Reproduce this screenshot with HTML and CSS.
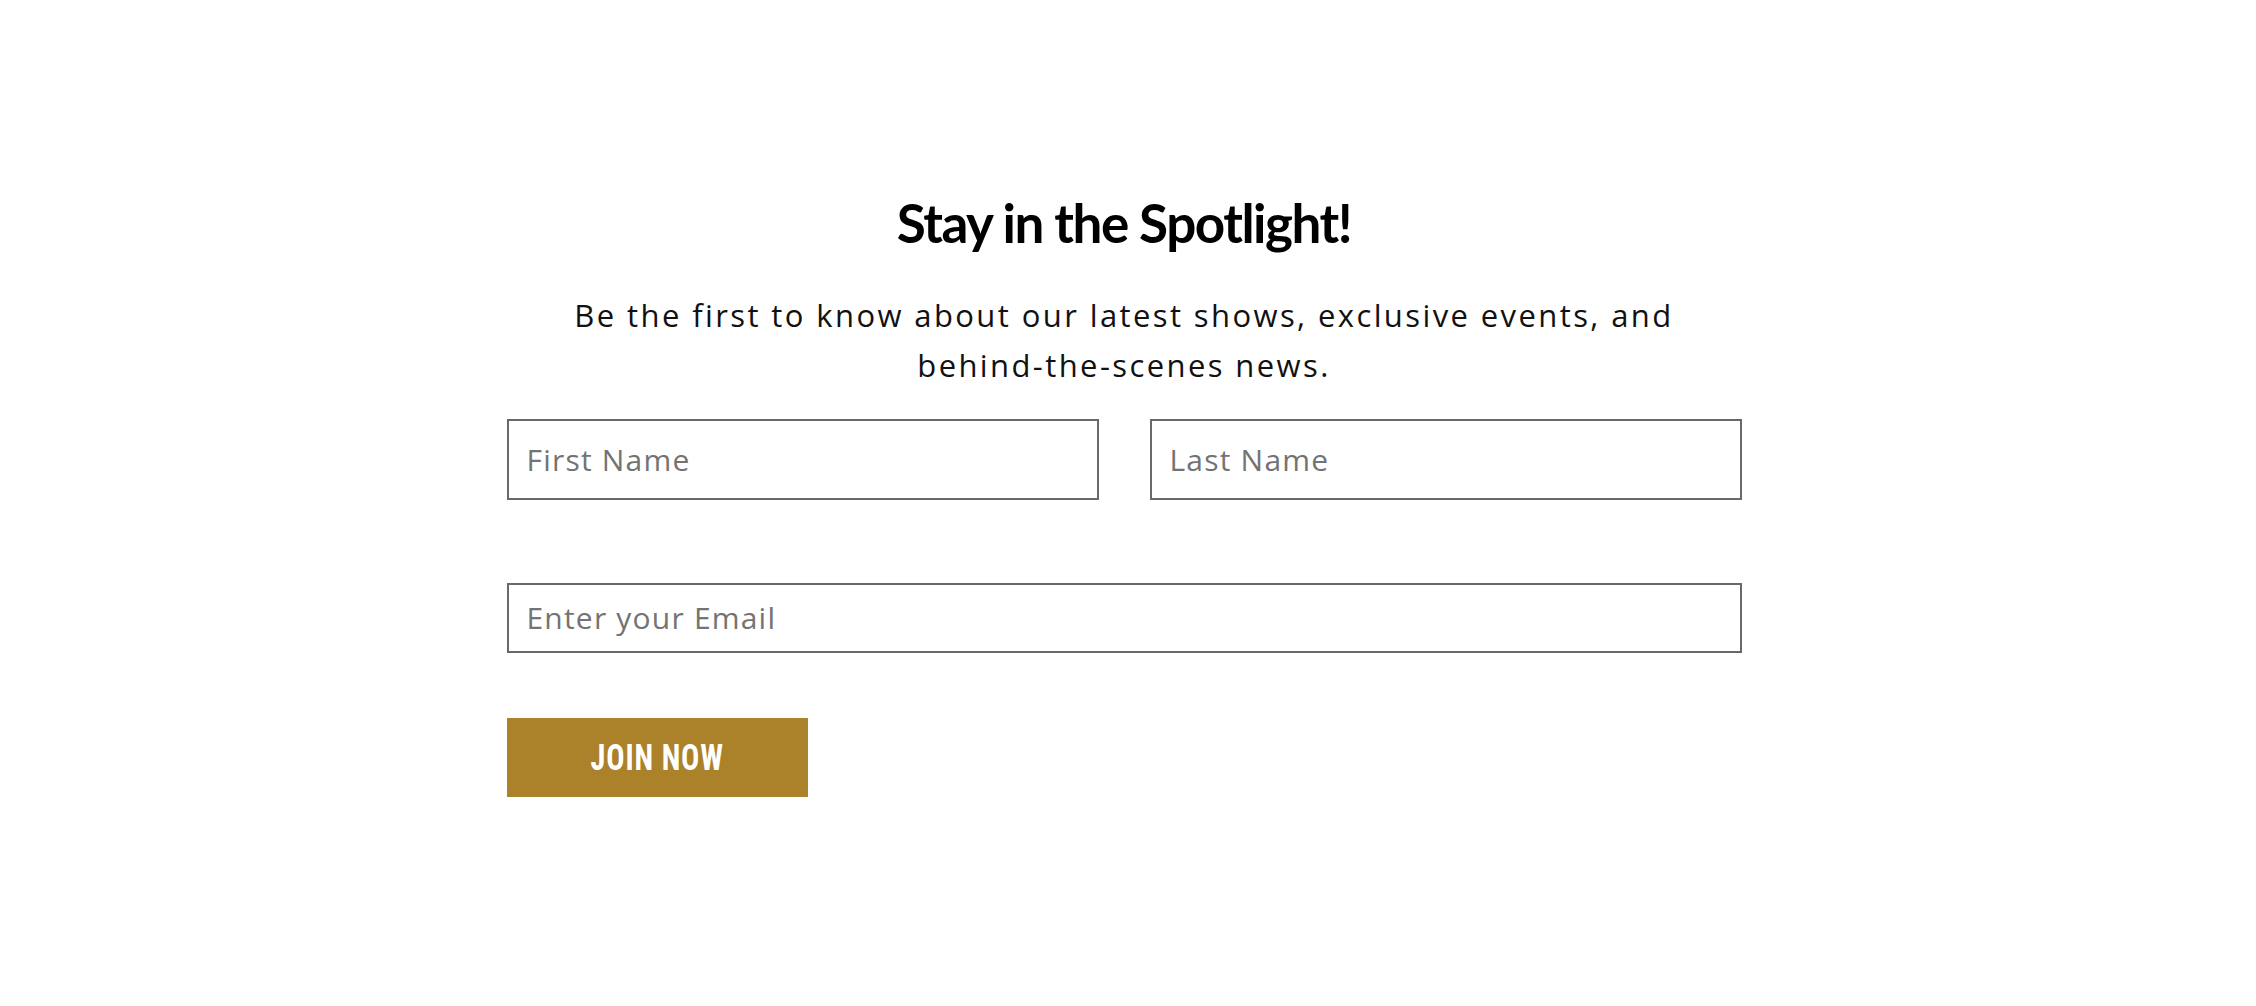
FILE: index.html
```html
<!DOCTYPE html>
<html lang="en">
<head>
<meta charset="utf-8">
<title>Stay in the Spotlight</title>
<link rel="stylesheet" href="styles.css">
</head>
<body>
<main class="page">
  <section class="signup">
    <h2 class="signup__title">Stay in the Spotlight!</h2>
    <p class="signup__text">Be the first to know about our latest shows, exclusive events, and behind-the-scenes news.</p>
    <form class="signup__form" onsubmit="return false">
      <div class="signup__row">
        <input class="field field--name" type="text" placeholder="First Name">
        <input class="field field--name" type="text" placeholder="Last Name">
      </div>
      <input class="field field--email" type="email" placeholder="Enter your Email">
      <button class="signup__btn" type="submit"><span class="signup__btn-label">JOIN NOW</span></button>
    </form>
  </section>
</main>
</body>
</html>
```
FILE: styles.css
```css
* { box-sizing: border-box; }
html, body { margin: 0; padding: 0; background: #ffffff; }
body { font-family: "Open Sans", "Liberation Sans", sans-serif; color: #000; }

.page {
  width: 2256px;
  height: 1006px;
  padding-right: 8px;
}

.signup {
  width: 1235px;
  margin: 0 auto;
  padding-top: 191px;
}

.signup__title {
  margin: 0;
  font-family: "Lato", "Liberation Sans", sans-serif;
  font-weight: 700;
  font-size: 53px;
  letter-spacing: -1.5px;
  line-height: 1.2;
  text-align: center;
  color: #000;
}

.signup__text {
  max-width: 1180px;
  margin: 35px auto 0;
  font-family: "Open Sans", "Liberation Sans", sans-serif;
  font-weight: 400;
  font-size: 31px;
  letter-spacing: 2.4px;
  line-height: 50px;
  text-align: center;
  color: #111;
}

.signup__form {
  margin-top: 29px;
  display: flex;
  flex-direction: column;
  align-items: flex-start;
}

.signup__row {
  width: 100%;
  display: grid;
  grid-template-columns: 1fr 1fr;
  column-gap: 51px;
}

.field {
  display: block;
  margin: 0;
  border: 2px solid #69696d;
  border-radius: 0;
  background: #fff;
  padding: 0 18px;
  font-family: "Open Sans", "Liberation Sans", sans-serif;
  font-size: 30px;
  letter-spacing: 1.2px;
  color: #222;
  outline: none;
}
.field::placeholder { color: #737373; opacity: 1; }

.field--name { width: 100%; height: 81px; }
.field--email { width: 100%; height: 70px; margin-top: 83px; }

.signup__btn {
  margin-top: 65px;
  width: 301px;
  height: 79px;
  border: 0;
  border-radius: 0;
  background: #ab812a;
  color: #fff;
  display: flex;
  align-items: center;
  justify-content: center;
  padding: 0;
  cursor: pointer;
}
.signup__btn-label {
  display: inline-block;
  font-family: "Liberation Sans Narrow", "Roboto", "Liberation Sans", sans-serif;
  font-stretch: condensed;
  font-weight: 700;
  font-size: 37px;
  letter-spacing: 1px;
  transform: scaleX(0.82);
}
```
